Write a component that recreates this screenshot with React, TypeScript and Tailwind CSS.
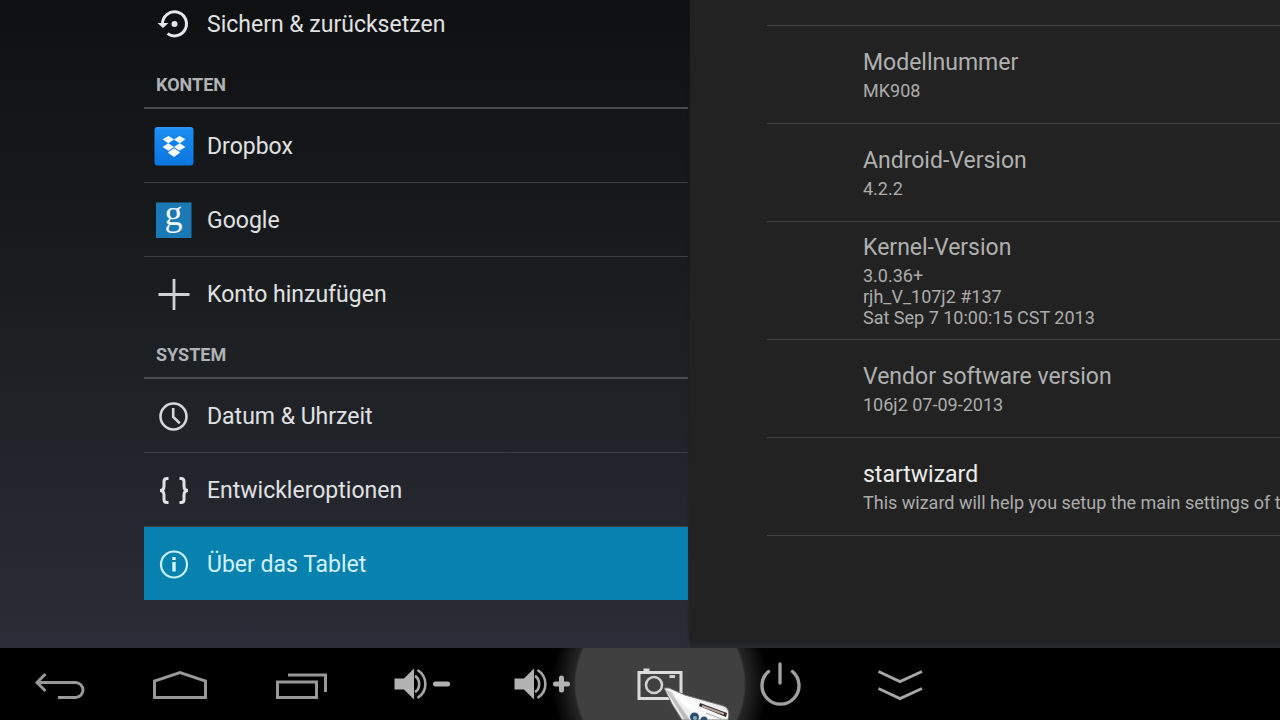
import type { ReactNode } from "react";

function IconFrame({ children }: { children: ReactNode }) {
  return (
    <svg viewBox="0 0 40 40" className="size-10 shrink-0 overflow-visible" fill="none" aria-hidden="true">
      {children}
    </svg>
  );
}

const restoreIcon = (
  <IconFrame>
    <path d="M8.5 20a12 12 0 1 1 5 9.6" stroke="#e6e6e6" strokeWidth="3" />
    <path d="M3.5 19h11l-5.5 5z" fill="#e6e6e6" />
    <circle cx="20.5" cy="20" r="3" fill="#e6e6e6" />
  </IconFrame>
);

const dropboxIcon = (
  <IconFrame>
    <defs>
      <linearGradient id="dropbox-tile" x1="0" y1="0" x2="0" y2="1">
        <stop offset="0" stopColor="#2f96f3" />
        <stop offset="0.1" stopColor="#1a8cf2" />
        <stop offset="1" stopColor="#0a76de" />
      </linearGradient>
    </defs>
    <rect x="0.5" y="1" width="39" height="38.5" rx="3" fill="url(#dropbox-tile)" />
    <path
      d="M14.5 10l5.5 3.6-5.8 3.7-5.6-4zM25.5 10L20 13.6l5.8 3.7 5.6-4zM8.6 21.1l5.6-3.8 5.8 3.7-5.5 3.7zM31.4 21.1l-5.6-3.8-5.8 3.7 5.5 3.7zM14.4 25.9l5.6-3.6 5.6 3.6v1.2L20 30.9l-5.6-3.8z"
      fill="#fff"
    />
  </IconFrame>
);

const googleIcon = (
  <IconFrame>
    <rect x="2" y="2.5" width="35.5" height="35.5" fill="#1b79b5" />
    <text
      x="19.5"
      y="25"
      textAnchor="middle"
      fill="#f2f7fb"
      className="font-['Liberation_Serif',serif] text-[36px]"
    >
      g
    </text>
  </IconFrame>
);

const addIcon = (
  <IconFrame>
    <path d="M4.5 20.5h31M20 5v31" stroke="#cfd1d3" strokeWidth="2.8" />
  </IconFrame>
);

const clockIcon = (
  <IconFrame>
    <circle cx="19.5" cy="20.5" r="13" stroke="#d4d6d8" strokeWidth="2.6" />
    <path d="M19.2 12v9l6.6 6.2" stroke="#d4d6d8" strokeWidth="2.6" />
  </IconFrame>
);

const bracesIcon = (
  <IconFrame>
    <g stroke="#e0e2e4" strokeWidth="3">
      <path d="M14.5 8.500h-1.500q-3 0-3 3v4.500q0 4.500-4 4.500q4 0 4 4.500v4.500q0 3 3 3h1.500" />
      <path d="M25.5 8.500h1.500q3 0 3 3v4.500q0 4.500 4 4.500q-4 0-4 4.500v4.500q0 3-3 3h-1.500" />
    </g>
  </IconFrame>
);

const infoIcon = (
  <IconFrame>
    <circle cx="20" cy="20.5" r="13" stroke="#c8eefb" strokeWidth="2.2" />
    <path d="M20 18v9.5" stroke="#d8f3fc" strokeWidth="3.4" />
    <path d="M20 13v3" stroke="#d8f3fc" strokeWidth="3.4" />
  </IconFrame>
);

type Item = { label: string; icon: ReactNode; selected?: boolean };

const accounts: Item[] = [
  { label: "Dropbox", icon: dropboxIcon },
  { label: "Google", icon: googleIcon },
  { label: "Konto hinzufügen", icon: addIcon },
];

const system: Item[] = [
  { label: "Datum & Uhrzeit", icon: clockIcon },
  { label: "Entwickleroptionen", icon: bracesIcon },
  { label: "Über das Tablet", icon: infoIcon, selected: true },
];

function SettingsRow({ item }: { item: Item }) {
  return (
    <li className="border-t border-[#3b3f42] first:border-t-0">
      <button
        type="button"
        aria-current={item.selected ? "page" : undefined}
        className={
          item.selected
            ? "flex h-[73px] w-full items-center gap-[13px] bg-[#0782ae] pl-2.5 text-left text-[23px] text-[#d2f0fa]"
            : "flex h-[73px] w-full items-center gap-[13px] pl-2.5 text-left text-[23px] text-[#e0e1e2]"
        }
      >
        {item.icon}
        <span className="pt-1">{item.label}</span>
      </button>
    </li>
  );
}

function SettingsGroup({ title, items }: { title: string; items: Item[] }) {
  return (
    <section>
      <h2 className="flex h-[49px] items-center border-b-2 border-[#484c50] pt-[3px] pl-3 text-lg font-bold text-[#b0b2b4]">
        {title}
      </h2>
      <ul>
        {items.map((item) => (
          <SettingsRow key={item.label} item={item} />
        ))}
      </ul>
    </section>
  );
}

type Detail = { title: string; lines: string[]; enabled?: boolean };

const details: Detail[] = [
  { title: "Modellnummer", lines: ["MK908"] },
  { title: "Android-Version", lines: ["4.2.2"] },
  { title: "Kernel-Version", lines: ["3.0.36+", "rjh_V_107j2 #137", "Sat Sep 7 10:00:15 CST 2013"] },
  { title: "Vendor software version", lines: ["106j2 07-09-2013"] },
  { title: "startwizard", lines: ["This wizard will help you setup the main settings of t"], enabled: true },
];

function NavIcon({ children }: { children: ReactNode }) {
  return (
    <svg viewBox="0 0 120 72" className="relative z-10 h-[72px] w-[120px]" fill="none" stroke="#989898" strokeWidth="3" aria-hidden="true">
      {children}
    </svg>
  );
}

const speaker = (
  <>
    <path d="M34.5 30.500h9.500l10-10v31l-10-10h-9.500z" fill="#b2b2b2" stroke="none" />
    <path d="M55 28c5.500 3 5.500 13 0 16M57.500 22c10.500 6.500 10.500 21.500 0 28" stroke="#a6a6a6" strokeWidth="2.6" />
  </>
);

const navButtons: { label: string; glow?: boolean; icon: ReactNode }[] = [
  {
    label: "Zurück",
    icon: <path d="M45.500 26l-8.500 8.500 8.500 8.500M37 34.500h38.500a7.500 7.500 0 0 1 0 15H58" />,
  },
  { label: "Startseite", icon: <path d="M34.500 49.500V33l25.500-8.500L85.500 33v16.500z" /> },
  {
    label: "Letzte Apps",
    icon: <path d="M37.500 34h39v15.500h-39zM48 27h37.500v17" />,
  },
  {
    label: "Leiser",
    icon: (
      <>
        {speaker}
        <path d="M75.500 36h12" stroke="#b2b2b2" strokeWidth="5" strokeLinecap="round" />
      </>
    ),
  },
  {
    label: "Lauter",
    icon: (
      <>
        {speaker}
        <path d="M75.500 36h12M81.500 30v12" stroke="#b2b2b2" strokeWidth="5" strokeLinecap="round" />
      </>
    ),
  },
  {
    label: "Bildschirmfoto",
    glow: true,
    icon: (
      <>
        <path d="M39 24.500h42v26H39zM43.500 22h6" stroke="#dcdcdc" />
        <circle cx="54" cy="37" r="8" stroke="#cfcfcf" strokeWidth="2.6" />
        <path d="M69.500 28.500h5.500" stroke="#cfcfcf" />
      </>
    ),
  },
  {
    label: "Ausschalten",
    icon: <path d="M60 16v19M48.500 23.500a18.500 18.500 0 1 0 24 0" strokeLinecap="round" stroke="#a0a0a0" strokeWidth="3.4" />,
  },
  {
    label: "Leiste ausblenden",
    icon: <path d="M38.500 23.500L60 33.500l22-10M38.500 40.500L60 50.500l22-10" stroke="#a6a6a6" />,
  },
];

function PenPointer() {
  return (
    <svg viewBox="0 0 68 36" className="pointer-events-none absolute bottom-0 left-[664px] z-20 h-9 w-[68px]" aria-hidden="true">
      <defs>
        <linearGradient id="pen-body" x1="0" y1="1" x2="1" y2="0.2">
          <stop offset="0" stopColor="#c8c8c8" />
          <stop offset="0.45" stopColor="#ffffff" />
          <stop offset="1" stopColor="#d5d5d5" />
        </linearGradient>
      </defs>
      <path d="M0 4l5 0 16 7 39 11q7 3 4 14H18L8 20z" fill="url(#pen-body)" stroke="#727272" strokeWidth="1" />
      <path d="M1 5l20 31h5L9 9z" fill="#9c9c9c" opacity="0.6" />
      <path d="M6 7l28 29h-8z" fill="#eeeeee" />
      <path d="M36 19l27 10-1 4-27-11z" fill="#33292a" />
      <path d="M38 22l22 8" stroke="#bba69e" strokeWidth="2" />
      <path d="M42 29l18 7" stroke="#a8a8a8" />
      <circle cx="30.5" cy="33" r="4.5" fill="#294e70" />
      <circle cx="31" cy="34" r="2" fill="#8aaac0" />
      <circle cx="40" cy="36" r="3.5" fill="#31526f" />
    </svg>
  );
}

export default function App() {
  return (
    <div className="flex h-screen flex-col overflow-hidden bg-black font-['Roboto','Liberation_Sans',sans-serif]">
      <main className="flex min-h-0 flex-1 overflow-hidden bg-linear-to-b from-[#0f1012] via-[#1b1f22] to-[#2a2d37]">
        <nav aria-label="Einstellungen" className="-mt-[13px] ml-36 w-[544px] shrink-0">
          <ul>
            <SettingsRow item={{ label: "Sichern & zurücksetzen", icon: restoreIcon }} />
          </ul>
          <SettingsGroup title="KONTEN" items={accounts} />
          <SettingsGroup title="SYSTEM" items={system} />
        </nav>
        <div className="ml-0.5 min-w-0 flex-1 bg-[#24292c] pb-1.5">
          <section className="h-full overflow-hidden bg-[#222222] pt-[25px] pl-[77px] shadow-[0_0_3px_#1a1d1f]">
            <dl className="border-t border-[#414141]">
              {details.map((detail) => (
                <div
                  key={detail.title}
                  className="flex min-h-[98px] flex-col justify-center border-b border-[#414141] pt-[9px] pb-[11px] pl-24 whitespace-nowrap"
                >
                  <dt className={detail.enabled ? "text-[23px]/[34px] text-[#ececec]" : "text-[23px]/[34px] text-[#b0b0b0]"}>
                    {detail.title}
                  </dt>
                  <dd className="text-lg/[21px] text-[#acacac]">
                    {detail.lines.map((line) => (
                      <p key={line}>{line}</p>
                    ))}
                  </dd>
                </div>
              ))}
            </dl>
          </section>
        </div>
      </main>
      <footer className="relative flex h-[72px] shrink-0 overflow-hidden bg-black">
        {navButtons.map((button) => (
          <button key={button.label} type="button" aria-label={button.label} className="relative w-[120px] shrink-0">
            {button.glow && (
              <span className="absolute top-1/2 left-1/2 size-[220px] -translate-1/2 bg-[radial-gradient(circle,#404040_0_84px,#262626_86px,transparent_108px)]" />
            )}
            <NavIcon>{button.icon}</NavIcon>
          </button>
        ))}
        <PenPointer />
      </footer>
    </div>
  );
}
